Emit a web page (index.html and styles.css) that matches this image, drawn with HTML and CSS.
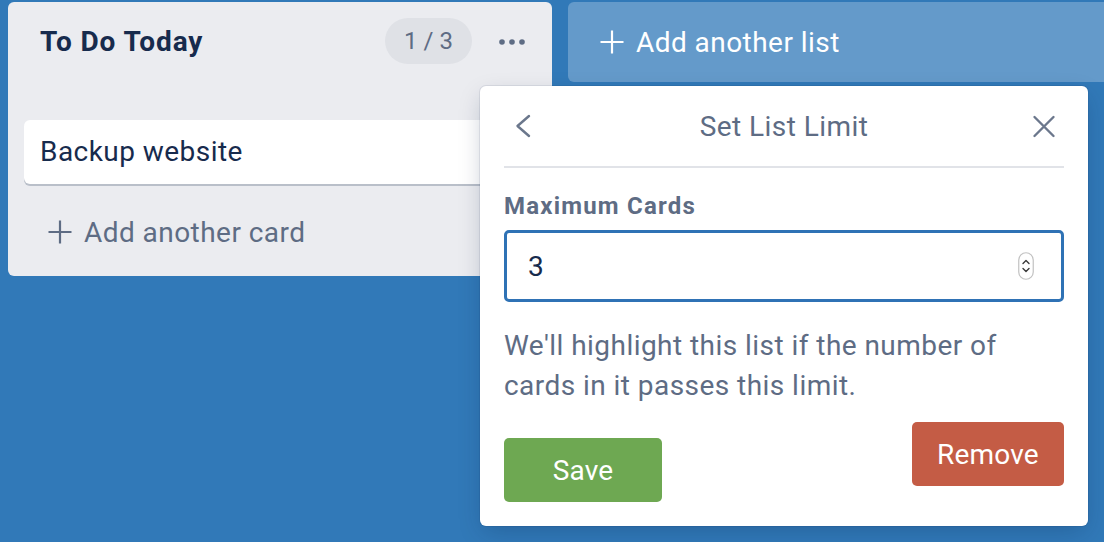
FILE: index.html
```html
<!DOCTYPE html>
<html lang="en">
<head>
<meta charset="utf-8">
<title>Set List Limit</title>
<link rel="stylesheet" href="styles.css">
</head>
<body>
<div class="board">
  <section class="list">
    <header class="list-header">
      <h2 class="list-title">To Do Today</h2>
      <span class="limit-badge">1 / 3</span>
      <button class="list-menu" type="button" aria-label="List actions">
        <svg width="30" height="8" viewBox="0 0 30 8"><circle cx="5" cy="4" r="2.8"/><circle cx="15" cy="4" r="2.8"/><circle cx="25" cy="4" r="2.8"/></svg>
      </button>
    </header>
    <div class="cards">
      <div class="card">Backup website</div>
    </div>
    <div class="add-card">
      <svg class="plus" width="24" height="24" viewBox="0 0 24 24"><path d="M12 0.5V23.5M0.5 12H23.5"/></svg>
      <span>Add another card</span>
    </div>
  </section>
  <div class="add-list">
    <svg class="plus" width="24" height="24" viewBox="0 0 24 24"><path d="M12 0.5V23.5M0.5 12H23.5"/></svg>
    <span>Add another list</span>
  </div>
</div>

<div class="popover">
  <header class="pop-header">
    <button class="icon-btn" type="button" aria-label="Back">
      <svg width="40" height="40" viewBox="0 0 40 40"><path d="M25 10L13.5 20L25 30"/></svg>
    </button>
    <span class="pop-title">Set List Limit</span>
    <button class="icon-btn" type="button" aria-label="Close">
      <svg width="40" height="40" viewBox="0 0 40 40"><path d="M10.5 11L29.5 30M29.5 11L10.5 30"/></svg>
    </button>
  </header>
  <label class="field-label" for="limit">Maximum Cards</label>
  <div class="input-wrap">
    <input id="limit" class="num-input" type="text" value="3">
    <svg class="spinner" width="16" height="28" viewBox="0 0 16 28"><rect x="0.75" y="0.75" width="14.5" height="26.5" rx="7.25"/><path d="M5 11.5L8 8.5L11 11.5M5 16.5L8 19.5L11 16.5"/></svg>
  </div>
  <p class="help">We'll highlight this list if the number of cards in it passes this limit.</p>
  <div class="actions">
    <button class="btn btn-save" type="button">Save</button>
    <button class="btn btn-remove" type="button">Remove</button>
  </div>
</div>
</body>
</html>
```

FILE: styles.css
```css
* { box-sizing: border-box; }

html, body {
  margin: 0;
  padding: 0;
  height: 100%;
}

body {
  background: #3179b8;
  font-family: Roboto, "Liberation Sans", sans-serif;
  color: #172b4d;
  overflow: hidden;
  position: relative;
  letter-spacing: 0.45px;
}

.board {
  display: flex;
  align-items: flex-start;
  gap: 16px;
  padding: 2px 0 0 8px;
}

.list {
  flex: 0 0 544px;
  width: 544px;
  background: #ebecf0;
  border-radius: 6px;
  padding: 0 16px 12px;
  display: flex;
  flex-direction: column;
}

.list-header {
  height: 80px;
  display: flex;
  align-items: center;
  padding: 0 4px 0 16px;
}

.list-title {
  flex: 1;
  margin: 0;
  font-size: 28px;
  font-weight: 700;
  color: #172b4d;
  line-height: 40px;
  letter-spacing: 0.9px;
}

.limit-badge {
  height: 46px;
  width: 87px;
  border-radius: 23px;
  background: #dfe1e6;
  color: #5e6c84;
  font-size: 24px;
  letter-spacing: 0;
  display: flex;
  align-items: center;
  justify-content: center;
  margin-top: -2px;
}

.list-menu {
  width: 40px;
  height: 40px;
  margin-left: 20px;
  border: 0;
  padding: 0;
  background: transparent;
  display: flex;
  align-items: center;
  justify-content: center;
}

.list-menu svg { fill: #5e6c84; }

.cards {
  margin-top: 38px;
}

.card {
  background: #fff;
  border-radius: 6px;
  box-shadow: 0 2px 0 rgba(9, 30, 66, 0.22);
  padding: 12px 16px;
  font-size: 28px;
  line-height: 40px;
  color: #172b4d;
}

.add-card {
  margin-top: 16px;
  height: 64px;
  display: flex;
  align-items: center;
  gap: 12px;
  padding-left: 24px;
  color: #5e6c84;
  font-size: 28px;
}

.plus {
  flex: 0 0 24px;
  fill: none;
  stroke-width: 2.2;
}

.add-card .plus { stroke: #5e6c84; }

.add-list {
  flex: 0 0 544px;
  height: 80px;
  border-radius: 6px;
  background: rgba(255, 255, 255, 0.25);
  color: #fff;
  display: flex;
  align-items: center;
  gap: 12px;
  padding-left: 32px;
  font-size: 28px;
}

.add-list .plus { stroke: #fff; }

.popover {
  position: absolute;
  left: 480px;
  top: 86px;
  width: 608px;
  height: 440px;
  background: #fff;
  border-radius: 6px;
  box-shadow: 0 8px 24px -4px rgba(9, 30, 66, 0.25), 0 0 0 1px rgba(9, 30, 66, 0.08);
  padding: 0 24px 24px;
  display: flex;
  flex-direction: column;
}

.pop-header {
  height: 82px;
  display: grid;
  grid-template-columns: 40px 1fr 40px;
  align-items: center;
  border-bottom: 2px solid #e1e3e8;
}

.pop-title {
  text-align: center;
  font-size: 28px;
  color: #5e6c84;
}

.icon-btn {
  width: 40px;
  height: 40px;
  border: 0;
  padding: 0;
  background: transparent;
  display: block;
}

.icon-btn svg {
  display: block;
  fill: none;
  stroke: #6b778c;
  stroke-width: 2.4;
  stroke-linecap: round;
  stroke-linejoin: round;
}

.field-label {
  margin-top: 22px;
  font-size: 24px;
  font-weight: 700;
  line-height: 32px;
  color: #5e6c84;
  letter-spacing: 1.2px;
}

.input-wrap {
  margin-top: 8px;
  height: 72px;
  border: 3px solid #2f72b5;
  border-radius: 5px;
  display: flex;
  align-items: center;
  padding: 0 27px 0 21px;
}

.num-input {
  flex: 1;
  border: 0;
  outline: 0;
  padding: 0;
  font-family: inherit;
  font-size: 28px;
  color: #172b4d;
  background: transparent;
}

.spinner {
  flex: 0 0 16px;
}

.spinner rect {
  fill: #fff;
  stroke: #c2c2c2;
  stroke-width: 1.2;
}

.spinner path {
  fill: none;
  stroke: #3a3a3a;
  stroke-width: 1.4;
  stroke-linecap: round;
  stroke-linejoin: round;
}

.help {
  margin: 24px 0 0;
  font-size: 28px;
  line-height: 40px;
  color: #5e6c84;
  padding-right: 50px;
}

.actions {
  margin-top: 16px;
  display: flex;
  justify-content: space-between;
  align-items: flex-start;
}

.btn {
  height: 64px;
  border: 0;
  border-radius: 5px;
  color: #fff;
  font-family: inherit;
  font-size: 28px;
  letter-spacing: 0.2px;
  padding: 0;
}

.btn-save {
  width: 158px;
  margin-top: 16px;
  background: #6ea852;
}

.btn-remove {
  width: 152px;
  background: #c45c45;
}
```
